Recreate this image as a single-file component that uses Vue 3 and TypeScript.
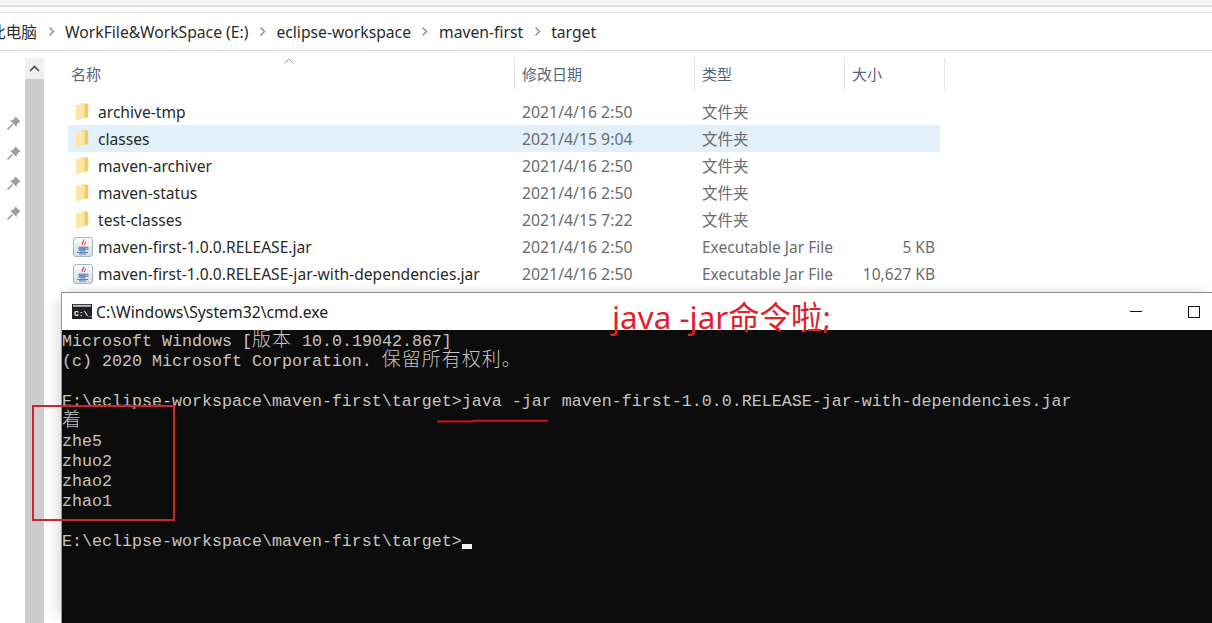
<script setup lang="ts">
interface Row { name: string; date: string; type: string; size: string; jar: boolean; selected: boolean }
const rows: Row[] = [
  { name: 'archive-tmp', date: '2021/4/16 2:50', type: '文件夹', size: '', jar: false, selected: false },
  { name: 'classes', date: '2021/4/15 9:04', type: '文件夹', size: '', jar: false, selected: true },
  { name: 'maven-archiver', date: '2021/4/16 2:50', type: '文件夹', size: '', jar: false, selected: false },
  { name: 'maven-status', date: '2021/4/16 2:50', type: '文件夹', size: '', jar: false, selected: false },
  { name: 'test-classes', date: '2021/4/15 7:22', type: '文件夹', size: '', jar: false, selected: false },
  { name: 'maven-first-1.0.0.RELEASE.jar', date: '2021/4/16 2:50', type: 'Executable Jar File', size: '5 KB', jar: true, selected: false },
  { name: 'maven-first-1.0.0.RELEASE-jar-with-dependencies.jar', date: '2021/4/16 2:50', type: 'Executable Jar File', size: '10,627 KB', jar: true, selected: false },
]
const crumbs = ['WorkFile&WorkSpace (E:)', 'eclipse-workspace', 'maven-first', 'target']
</script>

<template>
  <div class="desktop">
    <div class="explorer">
      <div class="ribbon"></div>
      <div class="crumbs">
        <span class="crumb first">此电脑</span>
        <template v-for="c in crumbs" :key="c">
          <svg class="chev" width="7" height="11" viewBox="0 0 7 11"><path d="M1.500 1.500 5.500 5.500 1.500 9.500" fill="none" stroke="#8a8a8a" stroke-width="1.4" /></svg>
          <span class="crumb">{{ c }}</span>
        </template>
      </div>
      <div class="body">
        <div class="pins">
          <svg v-for="n in 4" :key="n" class="pin" width="16" height="16" viewBox="0 0 16 16">
            <path d="M9.500 1.500 14.500 6.500 13 7.200 10.800 9.500 10.500 12 4 5.500 6.500 5.200 8.800 3Z" fill="#9c9c9c" />
            <path d="M6.500 9.500 1.500 14.500" fill="none" stroke="#9c9c9c" stroke-width="1.600" />
          </svg>
        </div>
        <div class="scrollbar">
          <div class="scroll-up">
            <svg width="11" height="7" viewBox="0 0 11 7"><path d="M1 6 5.500 1.500 10 6" fill="none" stroke="#4a4a4a" stroke-width="1.6" /></svg>
          </div>
          <div class="thumb"></div>
        </div>
        <div class="list">
          <svg class="sort" width="10" height="6" viewBox="0 0 10 6"><path d="M.5 5.500 5 1 9.500 5.500" fill="none" stroke="#9a9a9a" /></svg>
          <div class="head">
            <div class="hcell c-name">名称</div>
            <div class="hcell c-date">修改日期</div>
            <div class="hcell c-type">类型</div>
            <div class="hcell c-size">大小</div>
          </div>
          <div class="rows">
            <div v-for="r in rows" :key="r.name" class="row" :class="{ selected: r.selected }">
              <div class="c-name name-cell">
                <svg v-if="r.jar" class="ficon" width="20" height="20" viewBox="0 0 20 20">
                  <defs>
                    <linearGradient id="jarbg" x1="0" y1="0" x2="0" y2="1">
                      <stop offset="0" stop-color="#fbfbfb" />
                      <stop offset="1" stop-color="#d4dce6" />
                    </linearGradient>
                  </defs>
                  <rect x=".5" y=".5" width="19" height="19" rx="2.500" fill="url(#jarbg)" stroke="#aab4c0" />
                  <path d="M10.500 2.500C12 4.500 8 5.500 9.500 8 M12.500 4.500C13 6 11 6.500 11.500 8" fill="none" stroke="#d8503a" stroke-width="1.2" />
                  <path d="M5.500 9.500H13V12.500C13 14 11.500 14.500 9.500 14.500 7 14.500 5.500 14 5.500 12.500Z" fill="#6d93bd" />
                  <path d="M13 10.300H15V12.300H13 M4 15.500H15 M6 17H13" fill="none" stroke="#5b82ad" stroke-width="1" />
                </svg>
                <svg v-else class="ficon" width="20" height="20" viewBox="0 0 20 20">
                  <path d="M8 1.500H14.500L15.200 2.500V15.500H8Z" fill="#f3cb63" />
                  <path d="M3 3.500 11.500 1.500V16L3 18.500Z" fill="#fce6a8" />
                  <path d="M11.500 1.500V16" fill="none" stroke="#f7d987" stroke-width="1" />
                </svg>
                <span class="fname">{{ r.name }}</span>
              </div>
              <div class="c-date cell">{{ r.date }}</div>
              <div class="c-type cell">{{ r.type }}</div>
              <div class="c-size cell right">{{ r.size }}</div>
            </div>
          </div>
        </div>
      </div>
    </div>

    <div class="cmd">
      <div class="titlebar">
        <svg class="cmd-icon" width="20" height="15" viewBox="0 0 20 15">
          <rect width="20" height="15" fill="#222" />
          <rect x="1" y=".8" width="18" height="2" fill="#bdbdbd" />
          <text x="2" y="12" class="cmd-icon-text">C:\_</text>
        </svg>
        <span class="title">C:\Windows\System32\cmd.exe</span>
        <div class="controls">
          <span class="min"></span>
          <span class="max"></span>
        </div>
      </div>
      <div class="console">
        <div class="line">Microsoft Windows [<span class="cjk">版本</span> 10.0.19042.867]</div>
        <div class="line">(c) 2020 Microsoft Corporation. <span class="cjk">保留所有权利。</span></div>
        <div class="line">&nbsp;</div>
        <div class="line">E:\eclipse-workspace\maven-first\target&gt;java -jar maven-first-1.0.0.RELEASE-jar-with-dependencies.jar</div>
        <div class="line"><span class="cjk">着</span></div>
        <div class="line">zhe5</div>
        <div class="line">zhuo2</div>
        <div class="line">zhao2</div>
        <div class="line">zhao1</div>
        <div class="line">&nbsp;</div>
        <div class="line">E:\eclipse-workspace\maven-first\target&gt;<span class="cursor"></span></div>
      </div>
    </div>

    <div class="note">java -jar命令啦;</div>
    <div class="redbox"></div>
    <svg class="underline" width="115" height="6" viewBox="0 0 115 6">
      <path d="M2 3.500H36L38 2.700H111" fill="none" stroke="#d0121f" stroke-width="2" stroke-linecap="round" />
    </svg>
  </div>
</template>

<style>
html, body { margin: 0; background: #fff; overflow: hidden; }
</style>

<style scoped>
.desktop {
  position: relative;
  width: 1212px;
  height: 623px;
  overflow: hidden;
  background: #fff;
  font-family: "Noto Sans", "Noto Sans CJK SC", sans-serif;
}
.explorer { display: flex; flex-direction: column; height: 623px; }
.ribbon {
  height: 5px;
  background: #f6f6f6;
  border-bottom: 2px solid #dedede;
  margin-bottom: 5px;
  flex: none;
}
.crumbs {
  display: flex;
  align-items: center;
  height: 39px;
  box-sizing: border-box;
  margin-left: -10px;
  border-top: 1px solid #e0e0e0;
  border-bottom: 1px solid #dcdcdc;
  font-size: 15.7px;
  color: #2b2b2b;
  flex: none;
  white-space: nowrap;
}
.chev { margin: 0 10.5px; flex: none; }
.body { display: flex; flex: 1; min-height: 0; }
.pins {
  width: 25px;
  flex: none;
  display: flex;
  flex-direction: column;
  align-items: center;
  gap: 14px;
  padding: 64px 0 0 3px;
  box-sizing: border-box;
}
.pin { display: block; }
.scrollbar {
  width: 19px;
  margin-top: 7px;
  flex: none;
  display: flex;
  flex-direction: column;
}
.scroll-up {
  height: 21px;
  background: #f0f0f0;
  display: flex;
  align-items: center;
  justify-content: center;
}
.thumb { flex: 1; background: #cdcdcd; }
.list { position: relative; margin-left: 24px; width: 877px; }
.sort { position: absolute; left: 216px; top: 7px; }
.head {
  display: flex;
  height: 32px;
  margin-top: 7px;
  font-size: 15px;
  color: #55657c;
}
.hcell { display: flex; align-items: center; box-sizing: border-box; padding-left: 7px; padding-bottom: 2px; }
.c-name { width: 446px; flex: none; box-sizing: border-box; }
.c-date { width: 180px; flex: none; box-sizing: border-box; }
.c-type { width: 150px; flex: none; box-sizing: border-box; }
.c-size { width: 96px; flex: none; box-sizing: border-box; }
.head .c-name { width: 447px; padding-left: 3px; border-right: 1px solid #e5e5e5; }
.head .c-date { border-right: 1px solid #e5e5e5; }
.head .c-type { border-right: 1px solid #e5e5e5; }
.head .c-size { width: 100px; border-right: 1px solid #e5e5e5; }
.rows { margin-top: 8px; }
.row {
  display: flex;
  align-items: center;
  height: 27px;
  width: 872px;
  font-size: 15.5px;
}
.row.selected { background: #e2f0fb; }
.name-cell { display: flex; align-items: center; padding-left: 5px; }
.ficon { flex: none; }
.fname { margin-left: 5px; color: #2a2a2a; white-space: nowrap; font-size: 15.6px; }
.cell { padding-left: 8px; color: #6b6b6b; white-space: nowrap; }
.row .c-date { font-size: 15.8px; }
.right { text-align: right; padding-right: 5px; }
.cmd {
  position: absolute;
  left: 61px;
  top: 292px;
  width: 1151px;
  height: 331px;
  display: flex;
  flex-direction: column;
  background: #0c0c0c;
  border-top: 1px solid #8a8a8a;
  border-left: 1px solid #9a9a9a;
  box-sizing: border-box;
  box-shadow: -14px 0 12px -8px rgba(0, 0, 0, 0.1), 0 -5px 8px -3px rgba(0, 0, 0, 0.1);
}
.titlebar {
  height: 37px;
  flex: none;
  display: flex;
  align-items: center;
  background: #fff;
  padding-left: 10px;
  position: relative;
}
.cmd-icon { flex: none; }
.cmd-icon-text {
  font-family: "Liberation Mono", monospace;
  font-size: 8px;
  font-weight: 700;
  fill: #fff;
}
.title { margin-left: 4px; font-size: 15.75px; color: #222; white-space: nowrap; }
.controls { margin-left: auto; display: flex; align-items: center; padding-right: 12px; }
.min { width: 12px; height: 1px; background: #111; margin-right: 46px; }
.max { width: 10px; height: 10px; border: 1px solid #111; }
.console {
  padding: 2px 0 0 0;
  color: #c4c4c4;
  font-family: "Liberation Mono", monospace;
  font-size: 16.667px;
}
.line { height: 20px; line-height: 20px; white-space: pre; }
.cjk {
  font-family: "Noto Sans CJK SC", sans-serif;
  font-size: 19px;
  line-height: 0;
  letter-spacing: 1px;
  font-weight: 300;
}
.cursor {
  display: inline-block;
  width: 10px;
  height: 5px;
  background: #f2f2f2;
  vertical-align: -3px;
}
.note {
  position: absolute;
  left: 612px;
  top: 296px;
  font-family: "Noto Sans", "Noto Sans CJK SC", sans-serif;
  font-size: 31.4px;
  line-height: 42px;
  color: #e0202a;
  white-space: nowrap;
}
.redbox {
  position: absolute;
  left: 32px;
  top: 405px;
  width: 143px;
  height: 116px;
  border: 2px solid #cf2530;
  box-sizing: border-box;
}
.underline { position: absolute; left: 436px; top: 418px; }
</style>
